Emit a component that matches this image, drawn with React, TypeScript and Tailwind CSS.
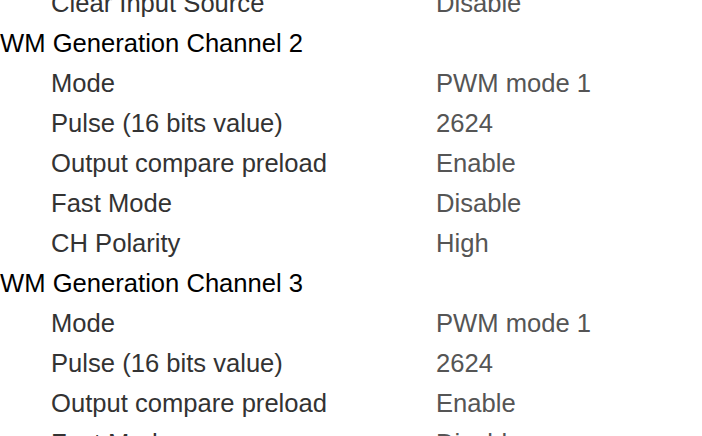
import React from "react";

interface Param {
  label: string;
  value: string;
}

interface Section {
  title: string;
  params: Param[];
}

const channelParams: Param[] = [
  { label: "Mode", value: "PWM mode 1" },
  { label: "Pulse (16 bits value)", value: "2624" },
  { label: "Output compare preload", value: "Enable" },
  { label: "Fast Mode", value: "Disable" },
  { label: "CH Polarity", value: "High" },
];

const sections: Section[] = [
  {
    title: "PWM Generation Channel 1",
    params: [{ label: "Clear Input Source", value: "Disable" }],
  },
  { title: "PWM Generation Channel 2", params: channelParams },
  { title: "PWM Generation Channel 3", params: channelParams },
];

const ParamRow = ({ param }: { param: Param }) => (
  <div className="flex h-10 items-center pl-[68px]">
    <span className="w-[385px] shrink-0 whitespace-nowrap text-[#333333]">
      {param.label}
    </span>
    <span className="whitespace-nowrap text-[#555555]">{param.value}</span>
  </div>
);

const App = () => {
  return (
    <div className="h-[436px] w-[702px] overflow-hidden bg-white">
      <div
        className="-ml-[17px] -mt-[57px] text-[25.6px] leading-10"
        style={{ fontFamily: '"Liberation Sans", Arial, sans-serif' }}
      >
        {sections.map((section) => (
          <div key={section.title}>
            <div className="flex h-10 items-center whitespace-nowrap text-black">
              {section.title}
            </div>
            {section.params.map((param) => (
              <ParamRow key={param.label} param={param} />
            ))}
          </div>
        ))}
      </div>
    </div>
  );
};

export default App;
